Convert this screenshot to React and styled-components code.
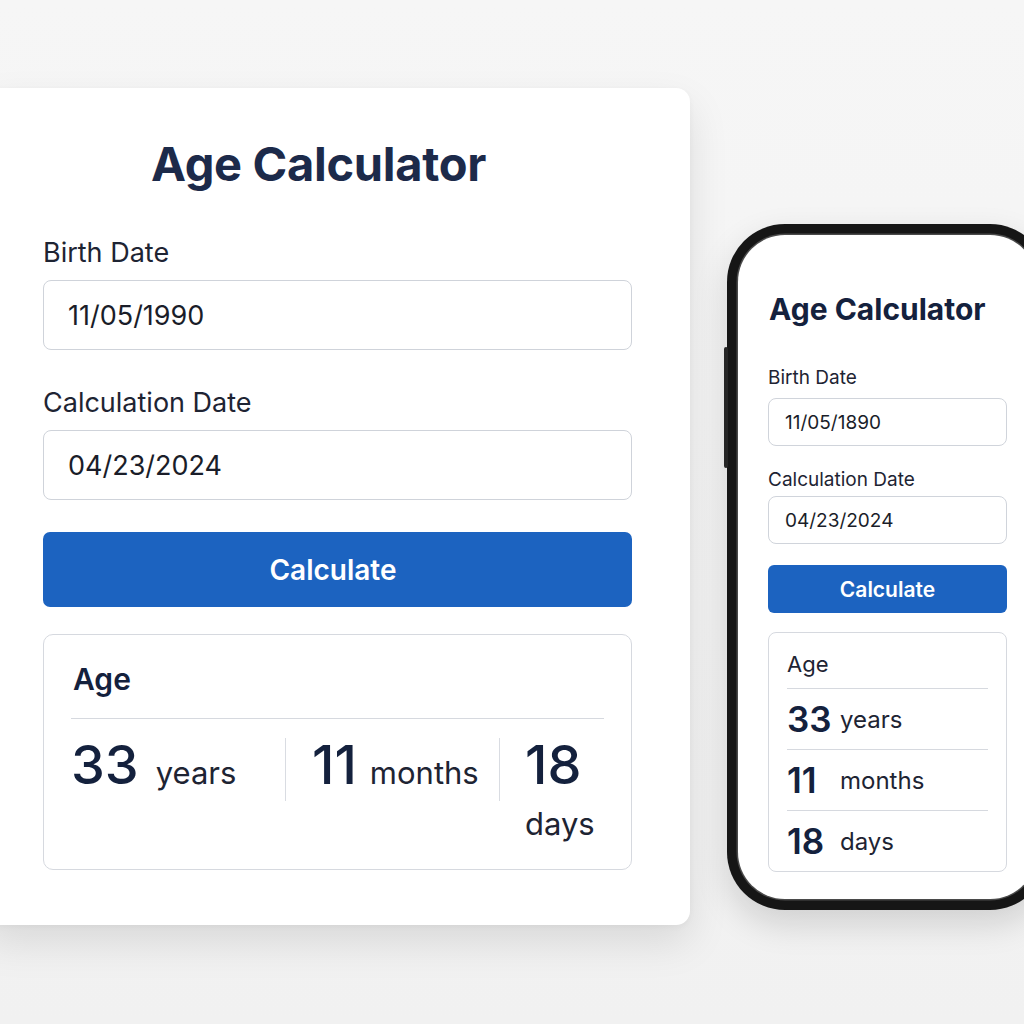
import React from "react";
import styled, { createGlobalStyle } from "styled-components";

const GlobalStyle = createGlobalStyle`
  html, body {
    margin: 0;
    padding: 0;
    background: #f3f3f3;
    font-family: Inter, "Noto Sans", "Liberation Sans", sans-serif;
    overflow: hidden;
  }
`;

const stats = [
  { value: "33", unit: "years" },
  { value: "11", unit: "months" },
  { value: "18", unit: "days" },
];

function App() {
  return (
    <>
      <GlobalStyle />
      <Page>
        <Card>
          <Title>Age Calculator</Title>
          <Label>Birth Date</Label>
          <Input readOnly value="11/05/1990" />
          <Label $gap={37}>Calculation Date</Label>
          <Input readOnly value="04/23/2024" />
          <Button>Calculate</Button>
          <Result>
            <ResultHead>Age</ResultHead>
            <StatRow>
              <Stat $width={214}>
                <Num>33</Num>
                <Unit>years</Unit>
              </Stat>
              <VDivider />
              <Stat $width={213} $pad={26} $gap={13}>
                <Num>11</Num>
                <Unit>months</Unit>
              </Stat>
              <VDivider />
              <Stat $pad={25} $stacked>
                <Num>18</Num>
                <Unit>days</Unit>
              </Stat>
            </StatRow>
          </Result>
        </Card>

        <Phone>
          <SideButton />
          <Screen>
            <PhoneTitle>Age Calculator</PhoneTitle>
            <PhoneLabel $gap={40}>Birth Date</PhoneLabel>
            <PhoneInput readOnly value="11/05/1890" $gap={9} />
            <PhoneLabel $gap={23}>Calculation Date</PhoneLabel>
            <PhoneInput readOnly value="04/23/2024" $gap={5} />
            <PhoneButton>Calculate</PhoneButton>
            <PhoneResult>
              <PhoneResultHead>Age</PhoneResultHead>
              {stats.map(s => (
                <PhoneStat key={s.unit}>
                  <PhoneNum>{s.value}</PhoneNum>
                  <PhoneUnit>{s.unit}</PhoneUnit>
                </PhoneStat>
              ))}
            </PhoneResult>
          </Screen>
        </Phone>
      </Page>
    </>
  );
}

const Page = styled.div`
  width: 1024px;
  height: 1024px;
  display: flex;
  align-items: flex-start;
  padding-top: 88px;
  box-sizing: border-box;
  overflow: hidden;
  background: linear-gradient(180deg, #f6f6f6 0%, #f1f1f1 100%);
`;

const Card = styled.div`
  flex-shrink: 0;
  width: 706px;
  margin-left: -16px;
  box-sizing: border-box;
  padding: 48px 58px 55px 59px;
  background: #fff;
  border-radius: 14px;
  box-shadow: 0 18px 40px rgba(0, 0, 0, 0.1), 0 2px 6px rgba(0, 0, 0, 0.04);
  display: flex;
  flex-direction: column;
`;

const Title = styled.h1`
  margin: 0;
  padding-right: 38px;
  text-align: center;
  font-size: 47px;
  line-height: 56px;
  font-weight: 700;
  color: #1c2a4a;
  letter-spacing: -0.3px;
`;

const Label = styled.div`
  margin-top: ${p => p.$gap || 45}px;
  font-size: 27px;
  line-height: 32px;
  color: #1e2433;
`;

const Input = styled.input`
  margin-top: 11px;
  height: 70px;
  box-sizing: border-box;
  width: 100%;
  border: 1px solid #cfd3da;
  border-radius: 8px;
  padding: 0 24px;
  font-family: Inter, "Liberation Sans", sans-serif;
  font-size: 27px;
  color: #1a1d29;
  background: #fff;
  outline: none;
`;

const Button = styled.button`
  margin-top: 32px;
  height: 75px;
  width: 100%;
  border: none;
  border-radius: 7px;
  padding: 0 9px 0 0;
  background: #1c63c0;
  color: #fff;
  font-family: Inter, "Liberation Sans", sans-serif;
  font-size: 28px;
  font-weight: 600;
`;

const Result = styled.div`
  margin-top: 27px;
  border: 1px solid #d6d9df;
  border-radius: 10px;
  padding: 26px 27px 25px;
`;

const ResultHead = styled.div`
  font-size: 30px;
  line-height: 36px;
  font-weight: 600;
  color: #14213d;
  padding: 0 3px 21px 2px;
  border-bottom: 1px solid #d6d9df;
`;

const StatRow = styled.div`
  margin-top: 19px;
  display: flex;
  align-items: flex-start;
`;

const Stat = styled.div`
  box-sizing: border-box;
  ${p => (p.$width ? `width: ${p.$width}px;` : "flex: 1;")}
  padding-left: ${p => p.$pad || 0}px;
  display: flex;
  flex-direction: ${p => (p.$stacked ? "column" : "row")};
  align-items: ${p => (p.$stacked ? "flex-start" : "baseline")};
  gap: ${p => (p.$stacked ? 12 : p.$gap || 17)}px;
`;

const Num = styled.span`
  font-size: 54px;
  line-height: 54px;
  font-weight: 500;
  color: #14213d;
`;

const Unit = styled.span`
  font-size: 31px;
  line-height: 40px;
  color: #1e2433;
`;

const VDivider = styled.div`
  flex-shrink: 0;
  width: 1px;
  height: 63px;
  background: #d9dce2;
`;

const Phone = styled.div`
  position: relative;
  flex-shrink: 0;
  width: 321px;
  height: 686px;
  margin-left: 37px;
  margin-top: 136px;
  box-sizing: border-box;
  padding: 11px;
  background: #161616;
  border-radius: 58px;
  box-shadow: 0 14px 34px rgba(0, 0, 0, 0.14);
`;

const SideButton = styled.div`
  position: absolute;
  left: -3px;
  top: 123px;
  width: 4px;
  height: 121px;
  border-radius: 2px;
  background: #262626;
`;

const Screen = styled.div`
  height: 100%;
  box-sizing: border-box;
  background: #fff;
  border-radius: 47px;
  box-shadow: 0 0 0 1.5px #4a4a4a;
  padding: 56px 30px 0 30px;
  display: flex;
  flex-direction: column;
`;

const PhoneTitle = styled.div`
  padding-left: 1px;
  font-size: 30px;
  line-height: 36px;
  font-weight: 700;
  color: #14213d;
`;

const PhoneLabel = styled.div`
  margin-top: ${p => p.$gap}px;
  font-size: 19px;
  line-height: 22px;
  color: #1e2433;
`;

const PhoneInput = styled.input`
  margin-top: ${p => p.$gap}px;
  height: 48px;
  width: 100%;
  box-sizing: border-box;
  border: 1px solid #d0d4db;
  border-radius: 8px;
  padding: 0 16px;
  font-family: Inter, "Liberation Sans", sans-serif;
  font-size: 19px;
  color: #1a1d29;
  background: #fff;
  outline: none;
`;

const PhoneButton = styled.button`
  margin-top: 21px;
  height: 48px;
  width: 100%;
  border: none;
  border-radius: 6px;
  background: #1c63c0;
  color: #fff;
  font-family: Inter, "Liberation Sans", sans-serif;
  font-size: 21px;
  font-weight: 600;
`;

const PhoneResult = styled.div`
  margin-top: 19px;
  border: 1px solid #d6d9df;
  border-radius: 8px;
  padding: 17px 18px 0;
  height: 240px;
  box-sizing: border-box;
`;

const PhoneResultHead = styled.div`
  font-size: 22px;
  line-height: 28px;
  color: #1e2433;
  padding-bottom: 10px;
  border-bottom: 1px solid #d6d9df;
`;

const PhoneStat = styled.div`
  height: 60px;
  display: flex;
  align-items: center;
  & + & {
    border-top: 1px solid #d6d9df;
  }
`;

const PhoneNum = styled.span`
  width: 53px;
  font-size: 35px;
  line-height: 36px;
  font-weight: 600;
  color: #14213d;
`;

const PhoneUnit = styled.span`
  font-size: 24px;
  color: #1e2433;
`;

export default App;
